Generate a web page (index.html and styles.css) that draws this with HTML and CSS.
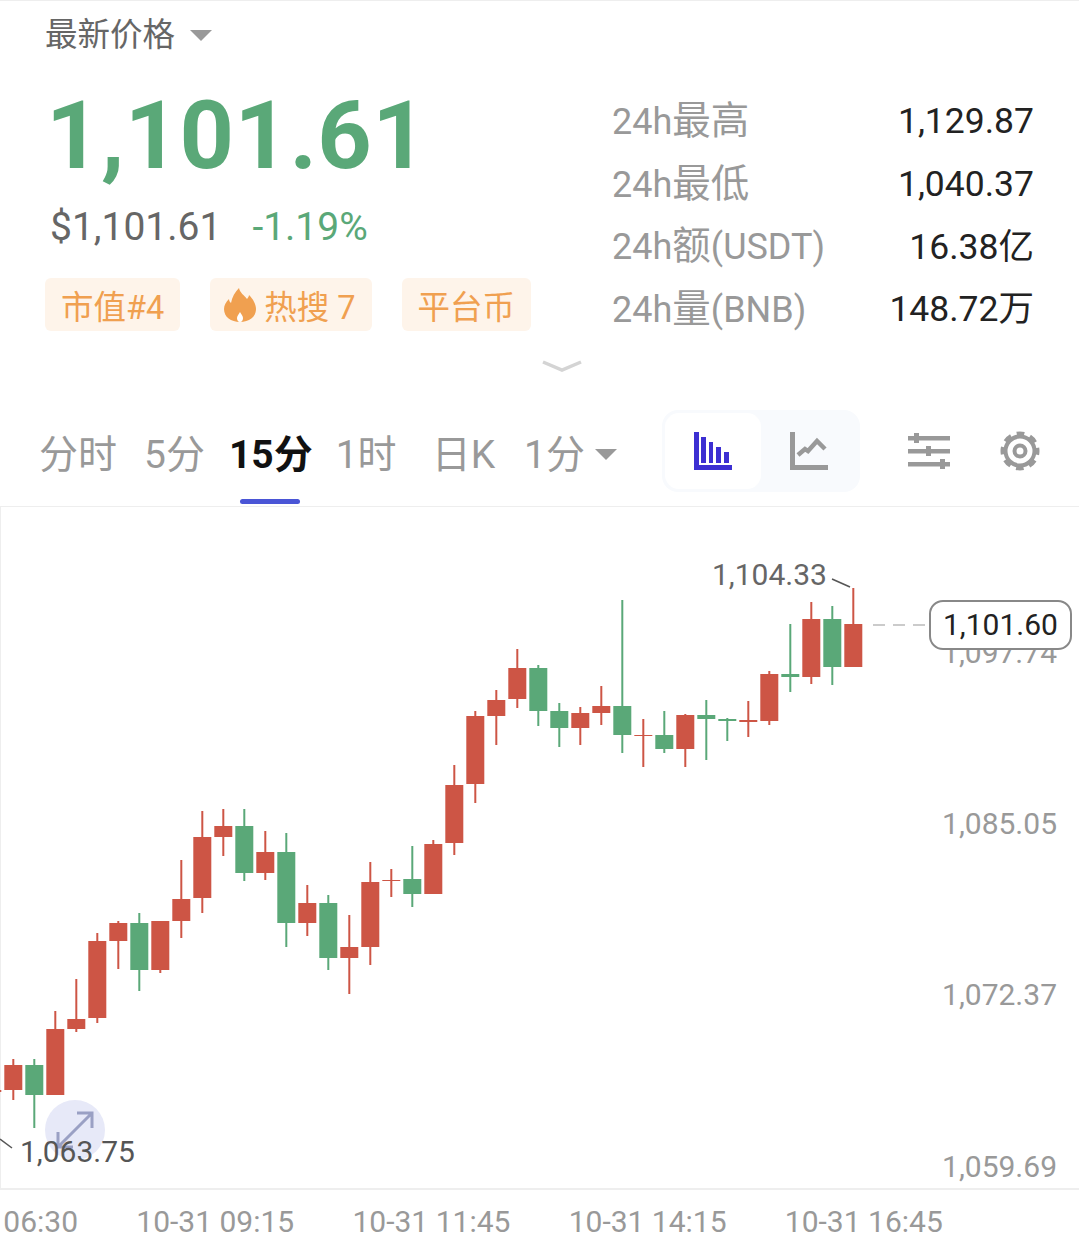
FILE: index.html
```html
<!DOCTYPE html>
<html lang="zh-CN">
<head>
    <meta charset="UTF-8">
    <meta name="viewport" content="width=device-width, initial-scale=1.0">
    <title>BNB/USDT</title>
    <link rel="stylesheet" href="styles.css">
</head>
<body>
    <div class="page">
        <div class="price-type">
            <span>最新价格</span>
            <i class="caret caret-type"></i>
        </div>

        <div class="summary">
            <div class="summary-left">
                <div class="last-price">1,101.61</div>
                <div class="sub-price">
                    <span class="usd">$1,101.61</span>
                    <span class="change">-1.19%</span>
                </div>
                <div class="tags">
                    <span class="tag">市值#4</span>
                    <span class="tag tag-hot">
                        <svg class="flame" viewBox="0 0 32 34">
                            <path fill="#f0a050" d="M15 0c1 5 5 7 8 11 1-1 2-3 2-4 4 4 7 9 7 14 0 8-7 13-16 13S0 29 0 21c0-4 2-7 5-10 0 2 1 3 2 4 1-6 4-11 8-15z"/>
                            <path fill="#fff" d="M16 24c1 2 3 4 3 6 0 2-1 4-3 4s-3-2-3-4c0-2 2-4 3-6z"/>
                        </svg>
                        热搜 7
                    </span>
                    <span class="tag">平台币</span>
                </div>
            </div>
            <dl class="stats">
                <dt>24h<span class="cjk">最高</span></dt><dd>1,129.87</dd>
                <dt>24h<span class="cjk">最低</span></dt><dd>1,040.37</dd>
                <dt>24h<span class="cjk">额</span>(USDT)</dt><dd>16.38亿</dd>
                <dt>24h<span class="cjk">量</span>(BNB)</dt><dd>148.72万</dd>
            </dl>
        </div>

        <div class="expand">
            <svg class="chevron" viewBox="0 0 40 12">
                <path d="M1 2l19 8 19-8" fill="none" stroke="#d4d4d4" stroke-width="3.5"/>
            </svg>
        </div>

        <div class="toolbar">
            <div class="periods">
                <span class="period p-time">分时</span>
                <span class="period p-5m">5分</span>
                <span class="period p-15m active">15分</span>
                <span class="period p-1h">1时</span>
                <span class="period p-day">日K</span>
                <span class="period p-1m">1分<i class="caret caret-period"></i></span>
            </div>
            <div class="chart-type">
                <span class="type-btn selected">
                    <svg class="tool-icon" viewBox="0 0 38 38" fill="#3c2fd2">
                        <path d="M0 0h5v33h33v5H0z"/>
                        <rect x="7" y="5" width="5" height="26"/>
                        <rect x="15" y="10" width="4" height="21"/>
                        <rect x="22" y="15" width="5" height="16"/>
                        <rect x="30" y="20" width="5" height="11"/>
                    </svg>
                </span>
                <span class="type-btn">
                    <svg class="tool-icon" viewBox="0 0 38 38">
                        <path fill="#999" d="M0 0h5v33h33v5H0z"/>
                        <path fill="none" stroke="#999" stroke-width="4.5" d="M8 23l7-6 3 2 9-10 8 8"/>
                    </svg>
                </span>
            </div>
            <svg class="tool-icon sliders" viewBox="0 0 42 38" fill="#999">
                <rect x="0" y="4" width="42" height="4.5"/>
                <rect x="0" y="17" width="42" height="4.5"/>
                <rect x="0" y="30" width="42" height="4.5"/>
                <rect x="6" y="1" width="5" height="10"/>
                <rect x="18" y="14" width="5" height="10"/>
                <rect x="32" y="27" width="5" height="10"/>
            </svg>
            <svg class="tool-icon gear" viewBox="0 0 40 40" fill="none" stroke="#999">
                <circle cx="20" cy="20" r="14.5" stroke-width="4"/>
                <circle cx="20" cy="20" r="17.5" stroke-width="4" stroke-dasharray="7.7 6.04" stroke-dashoffset="3.85"/>
                <circle cx="20" cy="20" r="5.5" stroke-width="4"/>
            </svg>
        </div>

        <div class="chart">
            <svg id="candles" class="chart-svg" viewBox="0 0 1078 682">
                <path class="leader" d="M832 72l18 8"/>
                <path class="leader" d="M0 632l12 9"/>
                <path class="last-line" d="M873 118h52"/>
                <text class="axis-price" x="1057" y="156" text-anchor="end">1,097.74</text>
                <text class="axis-price" x="1057" y="327" text-anchor="end">1,085.05</text>
                <text class="axis-price" x="1057" y="498" text-anchor="end">1,072.37</text>
                <text class="axis-price" x="1057" y="670" text-anchor="end">1,059.69</text>
                <text class="extreme" x="712" y="78">1,104.33</text>
            </svg>
            <div class="expand-btn">
                <svg viewBox="0 0 60 60" fill="none" stroke="#9aa0c4" stroke-width="3">
                    <path d="M14 46l32-32M32 13h15v15M13 32v15h15"/>
                </svg>
            </div>
            <span class="extreme-low">1,063.75</span>
            <div class="last-badge">1,101.60</div>
        </div>

        <div class="time-axis">
            <span class="time-first">06:30</span>
            <span>10-31 09:15</span>
            <span>10-31 11:45</span>
            <span>10-31 14:15</span>
            <span>10-31 16:45</span>
        </div>
    </div>

    <script src="chart.js"></script>
</body>
</html>
```

FILE: styles.css
```css
* {
    box-sizing: border-box;
}

body {
    margin: 0;
    background-color: #fff;
    font-family: Roboto, 'Noto Sans CJK SC', sans-serif;
    overflow: hidden;
}

.page {
    width: 1079px;
    height: 1251px;
    border-top: 1px solid #eee;
    overflow: hidden;
}

.caret {
    display: inline-block;
    width: 0;
    height: 0;
    border-style: solid;
    border-color: #999 transparent transparent transparent;
}

.price-type {
    display: flex;
    align-items: center;
    height: 66px;
    padding: 0 0 6px 45px;
    font-size: 32.5px;
    color: #666;
}

.caret-type {
    margin: 9px 0 0 15px;
    border-width: 11px 11px 0 11px;
}

.summary {
    display: flex;
    justify-content: space-between;
    padding: 0 45px;
}

.last-price {
    height: 120px;
    padding-left: 1px;
    font-size: 95px;
    line-height: 138px;
    font-weight: 700;
    letter-spacing: 0.4px;
    color: #5aa878;
}

.sub-price {
    display: flex;
    gap: 31px;
    align-items: center;
    height: 62px;
    margin-top: 9px;
    padding-left: 5px;
    font-size: 39px;
}

.usd {
    color: #666;
}

.change {
    color: #5aa878;
}

.tags {
    display: flex;
    gap: 30px;
    margin-top: 20px;
}

.tag {
    display: flex;
    align-items: center;
    height: 53px;
    padding: 0 16px;
    background-color: #fef4ea;
    border-radius: 6px;
    font-size: 32.5px;
    color: #f0a050;
}

.tag-hot {
    padding-left: 14px;
}

.flame {
    width: 32px;
    height: 34px;
    margin-right: 8px;
}

.stats {
    display: grid;
    grid-template-columns: 1fr auto;
    grid-auto-rows: 62.7px;
    align-items: center;
    width: 422px;
    margin: 23px 0 0;
}

.stats dt {
    line-height: 40px;
    font-size: 36px;
    color: #999;
}

.cjk {
    font-size: 38.5px;
}

.stats dd {
    margin: 0;
    line-height: 40px;
    text-align: right;
    font-size: 35.5px;
    color: #222;
}

.expand {
    display: flex;
    justify-content: center;
    height: 62px;
    padding: 19px 0 0 45px;
}

.chevron {
    width: 40px;
    height: 12px;
}

.toolbar {
    display: flex;
    align-items: center;
    height: 104px;
    border-bottom: 1px solid #eee;
    padding: 0 0 7px 39px;
}

.periods {
    display: flex;
    align-items: center;
    width: 623px;
    font-size: 39px;
    color: #999;
}

.period {
    position: relative;
    display: flex;
    align-items: center;
}

.p-5m { margin-left: 27px; }
.p-15m { margin-left: 24px; }
.p-1h { margin-left: 23px; }
.p-day { margin-left: 35px; }
.p-1m { margin-left: 29px; }

.active {
    font-weight: 700;
    color: #111;
}

.active::after {
    content: '';
    position: absolute;
    left: 11px;
    right: 13px;
    bottom: -25px;
    height: 5px;
    border-radius: 3px;
    background-color: #4a55d6;
}

.caret-period {
    margin: 7px 0 0 10px;
    border-width: 11px 11px 0 11px;
}

.chart-type {
    display: flex;
    align-items: center;
    width: 198px;
    height: 82px;
    padding: 3px;
    border-radius: 16px;
    background-color: #f8fafd;
}

.type-btn {
    display: flex;
    align-items: center;
    justify-content: center;
    width: 96px;
    height: 76px;
    border-radius: 14px;
}

.selected {
    background-color: #fff;
}

.tool-icon {
    width: 38px;
    height: 38px;
}

.sliders {
    width: 42px;
    margin-left: 48px;
}

.gear {
    width: 40px;
    height: 40px;
    margin-left: 50px;
}

.chart {
    position: relative;
    height: 683px;
    border-left: 1px solid #eee;
    border-bottom: 2px solid #eee;
}

.chart-svg {
    display: block;
    position: absolute;
    top: 0;
    left: -1px;
    width: 1078px;
    height: 682px;
}

.leader {
    fill: none;
    stroke: #555;
    stroke-width: 1.5;
}

.last-line {
    fill: none;
    stroke: #bbb;
    stroke-width: 1.5;
    stroke-dasharray: 12 8;
}

.axis-price {
    font-size: 30px;
    fill: #999;
}

.extreme {
    font-size: 30px;
    fill: #666;
}

.wick-up, .wick-down {
    stroke-width: 2;
}

.wick-up { stroke: #5aa878; }
.wick-down { stroke: #cd5545; }
.body-up { fill: #5aa878; }
.body-down { fill: #cd5545; }

.expand-btn {
    position: absolute;
    left: 44px;
    top: 593px;
    width: 60px;
    height: 60px;
    border-radius: 50%;
    background-color: #e7e9f8;
}

.extreme-low {
    position: absolute;
    left: 19px;
    top: 627px;
    font-size: 30px;
    line-height: 36px;
    color: #555;
}

.last-badge {
    position: absolute;
    left: 928px;
    top: 93px;
    width: 143px;
    height: 50px;
    border: 2px solid #888;
    border-radius: 14px;
    background-color: #fff;
    text-align: center;
    font-size: 30px;
    line-height: 46px;
    color: #222;
}

.time-axis {
    display: flex;
    gap: 58.3px;
    margin-left: -75px;
    padding-top: 14px;
    font-size: 30px;
    line-height: 36px;
    color: #999;
    white-space: nowrap;
}

.time-first {
    width: 153px;
    text-align: right;
}
```

FILE: chart.js
```js
// x center, wick top, body top, body bottom, wick bottom, u = green / d = red
const STEP = 21;
const FIRST_X = -7.7;
const CHART_TOP = 507;
const candles = [
    ['d', 1086, 1090, 1092, 1096],
    ['d', 1059, 1065, 1090, 1100],
    ['u', 1059, 1065, 1095, 1128],
    ['d', 1011, 1029, 1095, 1095],
    ['d', 979, 1019, 1029, 1032],
    ['d', 933, 941, 1018, 1023],
    ['d', 921, 923, 941, 969],
    ['u', 913, 923, 970, 991],
    ['d', 921, 921, 970, 973],
    ['d', 860, 899, 921, 938],
    ['d', 811, 837, 898, 913],
    ['d', 809, 826, 837, 856],
    ['u', 809, 826, 873, 881],
    ['d', 831, 852, 873, 880],
    ['u', 833, 852, 923, 947],
    ['d', 885, 903, 923, 936],
    ['u', 895, 903, 958, 970],
    ['d', 915, 947, 958, 994],
    ['d', 862, 882, 947, 965],
    ['d', 869, 880, 881, 897],
    ['u', 846, 879, 894, 907],
    ['d', 840, 844, 894, 894],
    ['d', 765, 785, 843, 855],
    ['d', 711, 716, 784, 803],
    ['d', 690, 700, 716, 745],
    ['d', 649, 668, 699, 708],
    ['u', 665, 668, 711, 726],
    ['u', 703, 711, 728, 747],
    ['d', 707, 713, 728, 745],
    ['d', 686, 706, 713, 725],
    ['u', 600, 706, 735, 753],
    ['d', 719, 735, 736, 767],
    ['u', 711, 735, 749, 753],
    ['d', 714, 715, 749, 767],
    ['u', 700, 715, 719, 760],
    ['u', 718, 719, 721, 741],
    ['d', 701, 720, 722, 737],
    ['d', 671, 674, 721, 725],
    ['u', 624, 674, 677, 692],
    ['d', 602, 619, 677, 684],
    ['u', 606, 619, 667, 685],
    ['d', 588, 624, 667, 667]
];

const svg = document.getElementById('candles');
const NS = 'http://www.w3.org/2000/svg';

candles.forEach(function(c, i) {
    const x = FIRST_X + i * STEP;
    const name = c[0] === 'u' ? 'up' : 'down';

    const wick = document.createElementNS(NS, 'line');
    wick.setAttribute('class', 'wick-' + name);
    wick.setAttribute('x1', x);
    wick.setAttribute('x2', x);
    wick.setAttribute('y1', c[1] - CHART_TOP);
    wick.setAttribute('y2', c[4] - CHART_TOP);
    svg.appendChild(wick);

    const body = document.createElementNS(NS, 'rect');
    body.setAttribute('class', 'body-' + name);
    body.setAttribute('x', x - 9);
    body.setAttribute('y', c[2] - CHART_TOP);
    body.setAttribute('width', 18);
    body.setAttribute('height', c[3] - c[2]);
    svg.appendChild(body);
});
```
